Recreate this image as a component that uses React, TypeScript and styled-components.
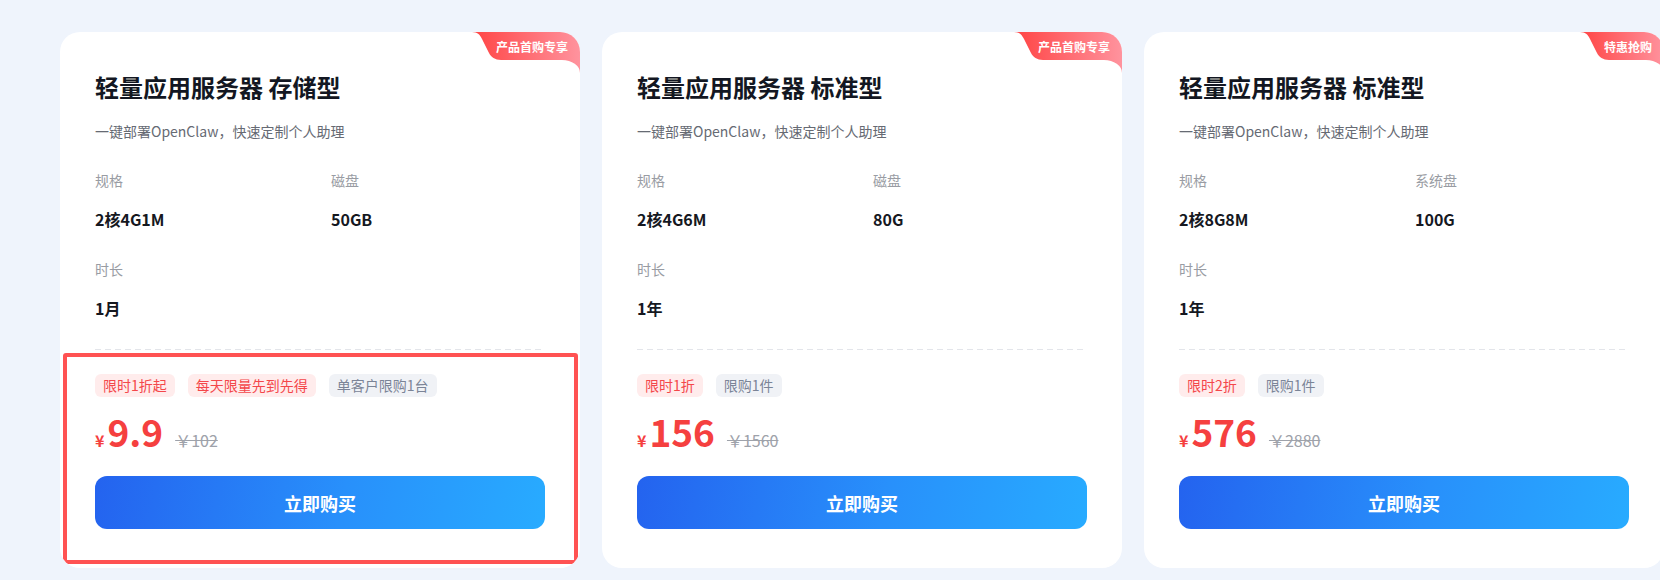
import React, { useId } from "react";
import styled, { createGlobalStyle } from "styled-components";

const GlobalStyle = createGlobalStyle`
  html, body {
    margin: 0;
    padding: 0;
    overflow: hidden;
    background: #eff4fc;
  }
  body {
    font-family: "Noto Sans CJK SC", "Noto Sans", sans-serif;
  }
`;

const Row = styled.div`
  display: flex;
  gap: 22px;
  padding: 32px 0 0 60px;
  width: max-content;
`;

const Card = styled.div`
  position: relative;
  flex: 0 0 520px;
  width: 520px;
  box-sizing: border-box;
  padding: 39px 35px 39px;
  background: #fff;
  border-radius: 20px;
  overflow: hidden;
`;

const RibbonBox = styled.div<{ $w: number }>`
  position: absolute;
  top: 0;
  right: 0;
  width: ${(p) => p.$w}px;
  height: 42px;
  & > svg {
    position: absolute;
    inset: 0;
  }
  & > span {
    position: relative;
    display: block;
    padding-left: 24px;
    line-height: 30px;
    font-size: 12px;
    font-weight: 700;
    color: #fff;
    white-space: nowrap;
  }
`;

const Title = styled.h2`
  margin: 0;
  font-size: 24px;
  line-height: 32px;
  font-weight: 700;
  color: #131722;
`;

const Desc = styled.p`
  margin: 18px 0 0;
  font-size: 14px;
  line-height: 20px;
  color: #666a73;
`;

const Specs = styled.div`
  display: grid;
  grid-template-columns: 1fr 1fr;
  column-gap: 22px;
  row-gap: 29px;
  margin-top: 29px;
`;

const Spec = styled.div`
  display: flex;
  flex-direction: column;
  gap: 18px;
`;

const Label = styled.span`
  font-size: 14px;
  line-height: 20px;
  color: #999ca3;
`;

const Value = styled.span`
  font-size: 16px;
  line-height: 22px;
  font-weight: 700;
  color: #15181f;
`;

const Divider = styled.div`
  height: 1px;
  margin-top: 30px;
  background-image: linear-gradient(to right, #e3e5ea 60%, transparent 0);
  background-size: 10px 1px;
`;

const Purchase = styled.div<{ $marked?: boolean }>`
  position: relative;
  padding-top: 24px;
  &::after {
    content: "";
    display: ${(p) => (p.$marked ? "block" : "none")};
    position: absolute;
    top: 3px;
    left: -32px;
    right: -33px;
    bottom: -35px;
    border: 4px solid #ff5252;
    border-radius: 3px;
    pointer-events: none;
  }
`;

const Tags = styled.div`
  display: flex;
  gap: 13px;
`;

const Tag = styled.span<{ $tone: "red" | "gray" }>`
  display: inline-block;
  padding: 0 8px;
  height: 23px;
  line-height: 23px;
  border-radius: 6px;
  font-size: 14px;
  color: ${(p) => (p.$tone === "red" ? "#f4474a" : "#7b8497")};
  background: ${(p) => (p.$tone === "red" ? "#ffecec" : "#f0f2f6")};
`;

const PriceRow = styled.div`
  display: flex;
  align-items: baseline;
  margin-top: 12px;
  height: 44px;
`;

const Yen = styled.span`
  font-size: 16px;
  font-weight: 700;
  color: #f5403f;
  margin-right: 3px;
`;

const Amount = styled.span`
  font-size: 37px;
  line-height: 44px;
  font-weight: 700;
  color: #f5403f;
`;

const Original = styled.span`
  margin-left: 12px;
  font-size: 16px;
  color: #9ea2aa;
  text-decoration: line-through;
`;

const BuyButton = styled.button`
  display: block;
  width: 100%;
  height: 53px;
  margin-top: 23px;
  border: none;
  border-radius: 12px;
  background: linear-gradient(100deg, #2463ef 0%, #2890fb 55%, #28abff 100%);
  color: #fff;
  font-family: inherit;
  font-size: 18px;
  font-weight: 700;
  cursor: pointer;
`;

type Product = {
  ribbon: string;
  title: string;
  specs: { label: string; value: string }[];
  tags: { text: string; tone: "red" | "gray" }[];
  price: string;
  original: string;
  marked?: boolean;
};

const products: Product[] = [
  {
    ribbon: "产品首购专享",
    title: "轻量应用服务器 存储型",
    specs: [
      { label: "规格", value: "2核4G1M" },
      { label: "磁盘", value: "50GB" },
      { label: "时长", value: "1月" },
    ],
    tags: [
      { text: "限时1折起", tone: "red" },
      { text: "每天限量先到先得", tone: "red" },
      { text: "单客户限购1台", tone: "gray" },
    ],
    price: "9.9",
    original: "￥102",
    marked: true,
  },
  {
    ribbon: "产品首购专享",
    title: "轻量应用服务器 标准型",
    specs: [
      { label: "规格", value: "2核4G6M" },
      { label: "磁盘", value: "80G" },
      { label: "时长", value: "1年" },
    ],
    tags: [
      { text: "限时1折", tone: "red" },
      { text: "限购1件", tone: "gray" },
    ],
    price: "156",
    original: "￥1560",
  },
  {
    ribbon: "特惠抢购",
    title: "轻量应用服务器 标准型",
    specs: [
      { label: "规格", value: "2核8G8M" },
      { label: "系统盘", value: "100G" },
      { label: "时长", value: "1年" },
    ],
    tags: [
      { text: "限时2折", tone: "red" },
      { text: "限购1件", tone: "gray" },
    ],
    price: "576",
    original: "￥2880",
  },
];

const Ribbon: React.FC<{ text: string }> = ({ text }) => {
  const id = useId().replace(/:/g, "");
  const w = 36 + text.length * 12;
  const d = `M0 0 C6 0 8 3 10 7 L17 21 C19 25 23 28 29 28 H${w - 18} A18 13 0 0 1 ${w} 41 V0 Z`;
  return (
    <RibbonBox $w={w}>
      <svg width={w} height={42} viewBox={`0 0 ${w} 42`}>
        <defs>
          <linearGradient id={`rb${id}`} x1="0" y1="0" x2="1" y2="0">
            <stop offset="0" stopColor="#ff4444" />
            <stop offset="1" stopColor="#ff939e" />
          </linearGradient>
        </defs>
        <path d={d} fill={`url(#rb${id})`} />
      </svg>
      <span>{text}</span>
    </RibbonBox>
  );
};

const ProductCard: React.FC<{ item: Product }> = ({ item }) => (
  <Card>
    <Ribbon text={item.ribbon} />
    <Title>{item.title}</Title>
    <Desc>一键部署OpenClaw，快速定制个人助理</Desc>
    <Specs>
      {item.specs.map((s) => (
        <Spec key={s.label}>
          <Label>{s.label}</Label>
          <Value>{s.value}</Value>
        </Spec>
      ))}
    </Specs>
    <Divider />
    <Purchase $marked={item.marked}>
      <Tags>
        {item.tags.map((t) => (
          <Tag key={t.text} $tone={t.tone}>
            {t.text}
          </Tag>
        ))}
      </Tags>
      <PriceRow>
        <Yen>¥</Yen>
        <Amount>{item.price}</Amount>
        <Original>{item.original}</Original>
      </PriceRow>
      <BuyButton type="button">立即购买</BuyButton>
    </Purchase>
  </Card>
);

const App: React.FC = () => (
  <>
    <GlobalStyle />
    <Row>
      {products.map((p, i) => (
        <ProductCard key={i} item={p} />
      ))}
    </Row>
  </>
);

export default App;
